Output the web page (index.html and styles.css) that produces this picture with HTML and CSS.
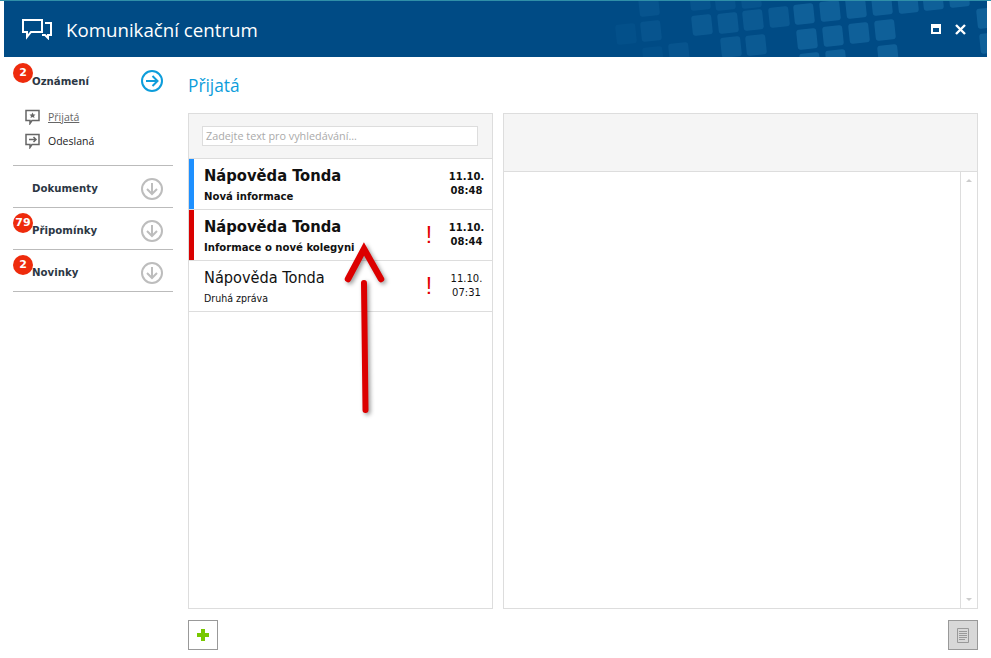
FILE: index.html
```html
<!DOCTYPE html>
<html lang="cs">
<head>
  <meta charset="UTF-8">
  <meta name="viewport" content="width=device-width, initial-scale=1.0">
  <title>Komunikační centrum</title>
  <link rel="stylesheet" href="styles.css">
</head>
<body>
  <div class="window">
    <div class="header">
      <svg class="pattern" width="983" height="56" viewBox="4 1 983 56" fill="#3fa0d5">
        <defs>
          <rect id="tile" x="-10" y="-10" width="20" height="20" rx="3" transform="rotate(-6)"/>
        </defs>
        <g opacity="0.06">
          <use href="#tile" x="626" y="34"/>
          <use href="#tile" x="653" y="57"/>
        </g>
        <g opacity="0.11">
          <use href="#tile" x="649" y="6"/>
          <use href="#tile" x="651" y="31"/>
          <use href="#tile" x="679" y="53"/>
          <use href="#tile" x="700" y="0"/>
          <use href="#tile" x="725" y="0"/>
          <use href="#tile" x="751" y="-2"/>
        </g>
        <g opacity="0.18">
          <use href="#tile" x="702" y="25"/>
          <use href="#tile" x="728" y="23"/>
          <use href="#tile" x="753" y="20"/>
          <use href="#tile" x="779" y="17"/>
          <use href="#tile" x="731" y="47"/>
          <use href="#tile" x="756" y="45"/>
        </g>
        <g opacity="0.25">
          <use href="#tile" x="804" y="14"/>
          <use href="#tile" x="830" y="11"/>
          <use href="#tile" x="856" y="8"/>
          <use href="#tile" x="882" y="5"/>
          <use href="#tile" x="908" y="3"/>
          <use href="#tile" x="933" y="0"/>
          <use href="#tile" x="959" y="-3"/>
          <use href="#tile" x="807" y="39"/>
          <use href="#tile" x="833" y="36"/>
          <use href="#tile" x="859" y="33"/>
          <use href="#tile" x="885" y="30"/>
          <use href="#tile" x="810" y="63"/>
          <use href="#tile" x="836" y="60"/>
          <use href="#tile" x="888" y="55"/>
          <use href="#tile" x="987" y="18"/>
          <use href="#tile" x="990" y="43"/>
        </g>
      </svg>
      <svg class="logo" width="30" height="22" viewBox="0 0 30 22" fill="none" stroke="#fff" stroke-width="2">
        <path d="M1 2h19v12H9l-4 5v-5H1z"/>
        <path d="M23 5h6v12h-3v3l-3-3h-3"/>
      </svg>
      <div class="header-title">Komunikační centrum</div>
      <div class="win-btns">
        <span class="win-max"></span>
        <svg width="11" height="11" viewBox="0 0 11 11" stroke="#fff" stroke-width="2.4"><path d="M1 1l9 9M10 1l-9 9"/></svg>
      </div>
    </div>

    <div class="body">
      <div class="sidebar">
        <div class="group">
          <div class="group-head first">
            <span class="badge">2</span>
            <span class="group-name">Oznámení</span>
            <svg class="circle" width="22" height="22" viewBox="0 0 22 22" fill="none" stroke="#0d9ddb" stroke-width="2"><circle cx="11" cy="11" r="10"/><path d="M5 11h11M11.500 6l5 5-5 5"/></svg>
          </div>
          <div class="sub-item">
            <svg width="16" height="16" viewBox="0 0 16 16" fill="none" stroke="#666" stroke-width="1.500"><path d="M1 1.500h13v10H7l-2 3v-3H1z"/><path d="M7.500 3.500l1 2h2l-1.500 1.500.5 2-2-1-2 1 .5-2L4.500 5.500h2z" fill="#666" stroke="none"/></svg>
            <span class="sub-link">Přijatá</span>
          </div>
          <div class="sub-item">
            <svg width="16" height="16" viewBox="0 0 16 16" fill="none" stroke="#666" stroke-width="1.500"><path d="M1 1.500h13v10H7l-2 3v-3H1z"/><path d="M4 6.500h7M8.500 4l2.500 2.500L8.500 9"/></svg>
            <span>Odeslaná</span>
          </div>
        </div>
        <div class="group-head">
          <span class="group-name">Dokumenty</span>
          <svg class="circle" width="22" height="22" viewBox="0 0 22 22" fill="none" stroke="#bdbdbd" stroke-width="2"><circle cx="11" cy="11" r="10"/><path d="M11 5v11M6 11l5 5 5-5"/></svg>
        </div>
        <div class="group-head">
          <span class="badge">79</span>
          <span class="group-name">Připomínky</span>
          <svg class="circle" width="22" height="22" viewBox="0 0 22 22" fill="none" stroke="#bdbdbd" stroke-width="2"><circle cx="11" cy="11" r="10"/><path d="M11 5v11M6 11l5 5 5-5"/></svg>
        </div>
        <div class="group-head">
          <span class="badge">2</span>
          <span class="group-name">Novinky</span>
          <svg class="circle" width="22" height="22" viewBox="0 0 22 22" fill="none" stroke="#bdbdbd" stroke-width="2"><circle cx="11" cy="11" r="10"/><path d="M11 5v11M6 11l5 5 5-5"/></svg>
        </div>
      </div>

      <div class="content">
        <div class="page-title">Přijatá</div>
        <div class="panels">
          <div class="list-panel">
            <div class="search-bar">
              <div class="search-box">Zadejte text pro vyhledávání...</div>
            </div>
            <div class="msg unread">
              <span class="flag flag-blue"></span>
              <div class="msg-text">
                <div class="msg-name">Nápověda Tonda</div>
                <div class="msg-subject">Nová informace</div>
              </div>
              <div class="msg-date">11.10.<br>08:48</div>
            </div>
            <div class="msg unread">
              <span class="flag flag-red"></span>
              <div class="msg-text">
                <div class="msg-name">Nápověda Tonda</div>
                <div class="msg-subject">Informace o nové kolegyni</div>
              </div>
              <span class="important">!</span>
              <div class="msg-date">11.10.<br>08:44</div>
            </div>
            <div class="msg">
              <span class="flag"></span>
              <div class="msg-text">
                <div class="msg-name">Nápověda Tonda</div>
                <div class="msg-subject">Druhá zpráva</div>
              </div>
              <span class="important">!</span>
              <div class="msg-date">11.10.<br>07:31</div>
            </div>
          </div>
          <div class="detail-panel">
            <div class="detail-head"></div>
            <div class="detail-body">
              <div class="detail-main"></div>
              <div class="scrollbar">
                <span class="arrow-up"></span>
                <span class="arrow-down"></span>
              </div>
            </div>
          </div>
        </div>
        <div class="footer">
          <button class="btn-add">
            <svg width="12" height="12" viewBox="0 0 12 12" fill="#78c800"><path d="M4 0h4v4h4v4H8v4H4V8H0V4h4z"/></svg>
          </button>
          <button class="btn-doc">
            <svg width="12" height="15" viewBox="0 0 12 15" fill="none" stroke="#999"><path d="M.5.500h11v14H.5z"/><path d="M2 3.500h8M2 5.500h8M2 7.500h8M2 9.500h8M2 11.500h6"/></svg>
          </button>
        </div>
      </div>
    </div>

    <svg class="callout" width="60" height="180" viewBox="0 0 60 180" fill="none" stroke="#dc0000" stroke-width="6" stroke-linecap="round">
      <path d="M6 42L22 12l17 30" stroke-width="6.500"/>
      <path d="M22 46l1.500 127"/>
    </svg>
  </div>
</body>
</html>
```

FILE: styles.css
```css
* { box-sizing: border-box; }
html, body { margin: 0; padding: 0; }
body { width: 991px; height: 658px; overflow: hidden; background: #fff; border-top: 1px solid #2f8fa8; font-family: "DejaVu Sans", sans-serif; color: #222; }

.window { position: relative; height: 657px; margin: 0 4px; display: flex; flex-direction: column; }

.header { position: relative; height: 56px; flex: none; background: #004b85; color: #fff; display: flex; align-items: center; padding-left: 18px; overflow: hidden; }
.pattern { position: absolute; left: 0; top: 0; }
.logo { position: relative; flex: none; }
.header-title { position: relative; margin-left: 14px; font-family: "Open Sans", sans-serif; font-size: 18.700px; }
.win-btns { position: relative; margin-left: auto; margin-right: 21px; display: flex; align-items: center; gap: 14px; }
.win-max { display: block; width: 10px; height: 10px; border: 2px solid #fff; border-top-width: 4px; }

.body { flex: 1; display: flex; min-height: 0; }

.sidebar { width: 184px; flex: none; padding: 0 15px 0 9px; }
.group { height: 109px; border-bottom: 1px solid #bbb; }
.group-head { position: relative; height: 42px; display: flex; align-items: center; padding-left: 19px; padding-right: 10px; padding-top: 4px; border-bottom: 1px solid #bbb; font-size: 10.200px; font-weight: bold; color: #2c3744; }
.group-head.first { height: 48px; padding-top: 0; border-bottom: none; }
.group-name { flex: 1; }
.circle { flex: none; }
.badge { position: absolute; left: 0; top: 5px; width: 20px; height: 20px; border-radius: 50%; background: #ee2b0c; color: #fff; font-size: 11px; line-height: 20px; text-align: center; }
.group-head.first .badge { top: 6px; }

.sub-item { height: 24px; display: flex; align-items: center; gap: 7px; padding-left: 12px; font-family: "Open Sans", sans-serif; font-size: 10.500px; color: #222; }
.sub-link { color: #666; text-decoration: underline; }

.content { flex: 1; padding-right: 9px; display: flex; flex-direction: column; }
.page-title { height: 56px; padding-top: 17px; font-family: "Open Sans", sans-serif; font-size: 17.300px; color: #0d9ddb; }
.panels { height: 496px; display: flex; gap: 10px; }

.list-panel { width: 305px; flex: none; border: 1px solid #ddd; }
.search-bar { height: 45px; background: #f5f5f5; border-bottom: 1px solid #ddd; padding: 12px 14px 0 13px; }
.search-box { height: 20px; background: #fff; border: 1px solid #ddd; padding-left: 3px; font-family: "Open Sans", sans-serif; font-size: 10.800px; line-height: 18px; color: #aaa; }

.msg { height: 51px; display: flex; align-items: stretch; border-bottom: 1px solid #ddd; }
.flag { width: 5px; flex: none; }
.flag-blue { background: #1e90ff; }
.flag-red { background: #d90000; }
.msg-text { flex: 1; padding: 6px 0 0 10px; color: #111; font-family: "DejaVu Sans Condensed", "DejaVu Sans", sans-serif; }
.msg-name { font-size: 16.200px; line-height: 22px; }
.msg-subject { font-size: 10.500px; line-height: 18px; }
.unread .msg-name { font-size: 16.400px; font-weight: bold; }
.unread .msg-subject { font-family: "DejaVu Sans", sans-serif; font-size: 10.100px; line-height: 20px; font-weight: bold; }
.unread .msg-date { font-weight: bold; }
.important { width: 20px; flex: none; font-family: "Liberation Sans", sans-serif; font-size: 23px; line-height: 50px; color: #e20000; text-align: center; }
.msg-date { width: 53px; flex: none; padding: 11px 0 0 2px; text-align: center; font-size: 10px; line-height: 14px; color: #111; }

.detail-panel { flex: 1; border: 1px solid #ddd; display: flex; flex-direction: column; }
.detail-head { height: 58px; flex: none; background: #f5f5f5; border-bottom: 1px solid #ddd; }
.detail-body { flex: 1; display: flex; }
.detail-main { flex: 1; }
.scrollbar { width: 17px; flex: none; border-left: 1px solid #ddd; display: flex; flex-direction: column; justify-content: space-between; align-items: center; padding: 7px 0; }
.arrow-up { border: 3px solid transparent; border-top: 0; border-bottom: 3px solid #ccc; }
.arrow-down { border: 3px solid transparent; border-bottom: 0; border-top: 3px solid #ccc; }

.footer { display: flex; justify-content: space-between; margin-top: 11px; }
.footer button { width: 30px; height: 30px; padding: 0; border: 1px solid #999; display: flex; align-items: center; justify-content: center; }
.btn-add { background: #fff; }
.btn-doc { background: #d8d8d8; }

.callout { position: absolute; left: 338px; top: 236px; filter: drop-shadow(2px 2px 2px rgba(0,0,0,0.4)); }
```
